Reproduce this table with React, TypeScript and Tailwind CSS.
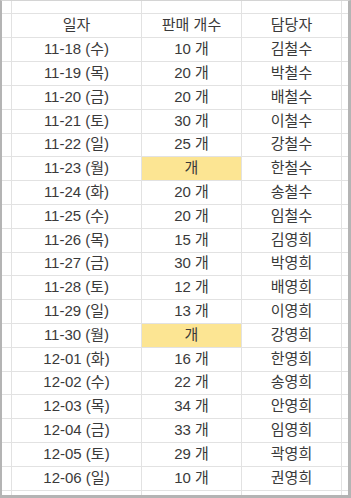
import React from 'react';

type Row = { date: string; qty: string; name: string };

const rows: Row[] = [
  { date: '11-18 (수)', qty: '10', name: '김철수' },
  { date: '11-19 (목)', qty: '20', name: '박철수' },
  { date: '11-20 (금)', qty: '20', name: '배철수' },
  { date: '11-21 (토)', qty: '30', name: '이철수' },
  { date: '11-22 (일)', qty: '25', name: '강철수' },
  { date: '11-23 (월)', qty: '', name: '한철수' },
  { date: '11-24 (화)', qty: '20', name: '송철수' },
  { date: '11-25 (수)', qty: '20', name: '임철수' },
  { date: '11-26 (목)', qty: '15', name: '김영희' },
  { date: '11-27 (금)', qty: '30', name: '박영희' },
  { date: '11-28 (토)', qty: '12', name: '배영희' },
  { date: '11-29 (일)', qty: '13', name: '이영희' },
  { date: '11-30 (월)', qty: '', name: '강영희' },
  { date: '12-01 (화)', qty: '16', name: '한영희' },
  { date: '12-02 (수)', qty: '22', name: '송영희' },
  { date: '12-03 (목)', qty: '34', name: '안영희' },
  { date: '12-04 (금)', qty: '33', name: '임영희' },
  { date: '12-05 (토)', qty: '29', name: '곽영희' },
  { date: '12-06 (일)', qty: '10', name: '권영희' },
];

const cell = 'border-r border-b border-[#e2e2e2] flex items-center justify-center';

const Line: React.FC<{ h: string; a?: string; b?: string; c?: string; hl?: boolean }> = ({ h, a, b, c, hl }) => (
  <div className={`grid grid-cols-[10px_130px_100px_100px_6px] ${h}`}>
    <div className={cell} />
    <div className={cell}>{a}</div>
    <div className={`${cell} ${hl ? 'bg-[#fce593]' : ''}`}>{b}</div>
    <div className={cell}>{c}</div>
    <div className="border-b border-[#e2e2e2]" />
  </div>
);

export default function App() {
  return (
    <div
      className="w-[351px] h-[498px] bg-white border-t border-t-[#d4d4d4] border-l-2 border-l-[#b4b4b4] border-r-[3px] border-r-[#b4b4b4] border-b-[3px] border-b-[#b4b4b4] flex flex-col overflow-hidden text-[15px] text-[#3a3a3a]"
      style={{ fontFamily: '"Liberation Sans", Arial, "Noto Sans CJK KR", sans-serif' }}
    >
      <Line h="h-[13px]" />
      <Line h="h-[24px]" a="일자" b="판매 개수" c="담당자" />
      {rows.map((r, i) => (
        <Line
          key={r.date}
          h={i % 5 === 3 ? 'h-[23px]' : 'h-[24px]'}
          a={r.date}
          b={r.qty ? `${r.qty} 개` : '개'}
          c={r.name}
          hl={!r.qty}
        />
      ))}
      <div className="grid grid-cols-[10px_130px_100px_100px_6px] flex-1">
        <div className="border-r border-[#e2e2e2]" />
        <div className="border-r border-[#e2e2e2]" />
        <div className="border-r border-[#e2e2e2]" />
        <div className="border-r border-[#e2e2e2]" />
        <div />
      </div>
    </div>
  );
}
